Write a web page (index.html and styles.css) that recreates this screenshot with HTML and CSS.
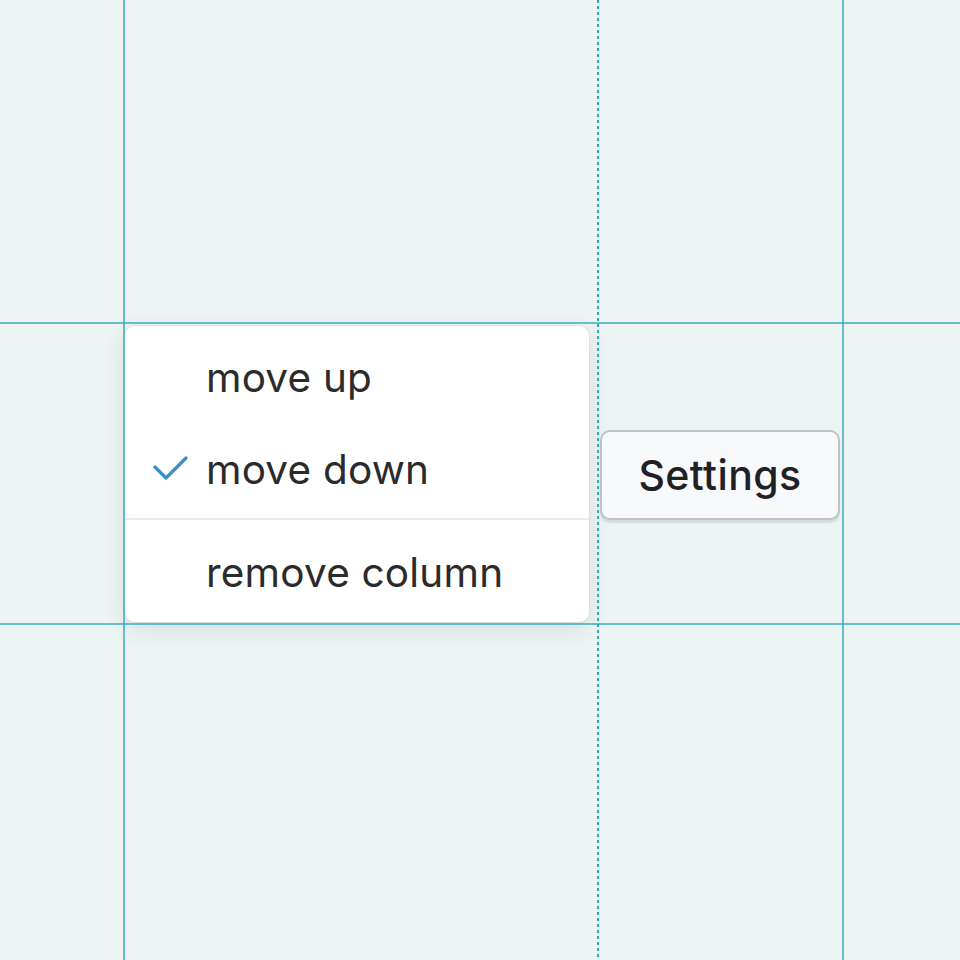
FILE: index.html
```html
<!DOCTYPE html>
<html>
<head>
<meta charset="utf-8">
<link rel="stylesheet" href="styles.css">
</head>
<body>
<div class="canvas">
  <div class="cell c1"></div>
  <div class="cell c2"></div>
  <div class="cell c3"></div>
  <div class="cell c4"></div>
  <div class="cell r2c1"></div>
  <div class="menu-cell">
    <div class="menu">
      <div class="item"><span class="check"></span><span class="label">move up</span></div>
      <div class="item"><span class="check"><svg width="36" height="28" viewBox="0 0 36 28"><polyline points="3,12 14,23 34,3" fill="none" stroke="#3a8ec3" stroke-width="3.2" stroke-linecap="round" stroke-linejoin="round"/></svg></span><span class="label">move down</span></div>
      <div class="divider"></div>
      <div class="item last"><span class="check"></span><span class="label">remove column</span></div>
    </div>
  </div>
  <div class="btn-cell">
    <button class="btn">Settings</button>
  </div>
  <div class="cell r2c4"></div>
  <div class="cell"></div><div class="cell"></div><div class="cell"></div><div class="cell"></div>
  <div class="guide v v1"></div>
  <div class="guide v dash v2"></div>
  <div class="guide v v3"></div>
  <div class="guide h h1"></div>
  <div class="guide h h2"></div>
</div>
</body>
</html>
```
FILE: styles.css
```css
html, body {
  margin: 0;
  padding: 0;
  background: #edf5f4;
}
.canvas {
  position: relative;
  width: 960px;
  height: 960px;
  display: grid;
  grid-template-columns: 124px 474px 245px 1fr;
  grid-template-rows: 323px 301px 1fr;
  font-family: Inter, "Noto Sans", sans-serif;
  overflow: hidden;
}
.menu-cell {
  padding: 3px 9px 2px 1px;
}
.menu {
  height: 100%;
  box-sizing: border-box;
  background: #fff;
  border-radius: 10px;
  box-shadow: 0 6px 22px rgba(40, 60, 60, 0.13), 0 0 0 1px rgba(0,0,0,0.03);
  padding: 6px 0 3px;
  display: flex;
  flex-direction: column;
}
.item {
  height: 92px;
  display: flex;
  align-items: center;
  color: #2b2b2b;
  font-size: 40.5px;
}
.check {
  width: 81px;
  display: flex;
  justify-content: flex-end;
  box-sizing: border-box;
}
.check svg {
  margin-right: 18px;
  margin-top: -2px;
}
.label {
  line-height: 1;
  letter-spacing: 0.2px;
}
.divider {
  height: 2px;
  background: #ececec;
  margin: 2px 0 7px;
}
.btn-cell {
  display: flex;
  align-items: center;
  padding: 0 3px 0 2px;
}
.btn {
  width: 240px;
  height: 90px;
  margin-top: 3px;
  background: #f8f9fb;
  border: 2px solid #bfc3c5;
  border-radius: 10px;
  box-shadow: 0 3px 2px rgba(0, 0, 0, 0.10);
  font-family: Inter, "Noto Sans", sans-serif;
  font-size: 41px;
  font-weight: 450;
  letter-spacing: 0.4px;
  color: #1f2125;
  padding: 0;
}
.guide {
  position: absolute;
  background: rgba(52, 168, 188, 0.72);
}
.guide.v {
  top: 0;
  bottom: 0;
  width: 2px;
}
.guide.h {
  left: 0;
  right: 0;
  height: 2px;
}
.v1 { left: 123px; }
.v3 { left: 842px; }
.h1 { top: 322px; }
.h2 { top: 623px; }
.guide.v.dash {
  left: 597px;
  width: 1.6px;
  background: repeating-linear-gradient(to bottom, #34a6bb 0 3px, transparent 3px 6px);
}
```
